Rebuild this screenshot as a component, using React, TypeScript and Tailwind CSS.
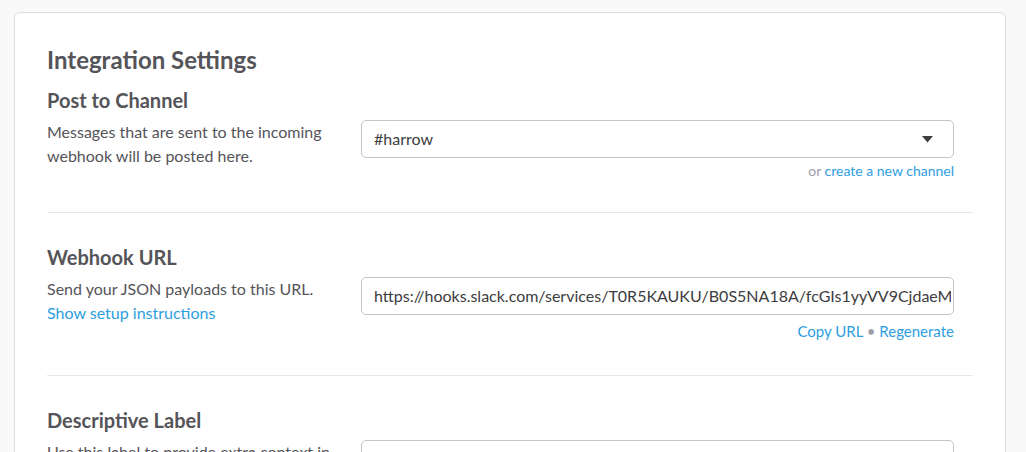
const font = { fontFamily: "Lato, 'Noto Sans', sans-serif" }

function Caret() {
    return (
        <svg width="11" height="7" viewBox="0 0 11 7" className="shrink-0">
            <path d="M0 0 L11 0 L5.5 6.5 Z" fill="#3d3c40" />
        </svg>
    )
}

export default function App() {
    return (
        <div className="min-h-screen bg-[#f9f9f9] pt-[12px] pl-[14px] pr-[20px]" style={font}>
            <div className="bg-white border border-[#dddddd] rounded-[6px] px-[32px] pt-[32px] text-[#555459]">
                <h1 className="text-[24px] font-bold leading-[30px] mb-[13px]">Integration Settings</h1>

                {/* Post to Channel */}
                <section className="pb-[32px] border-b border-[#e8e8e8]">
                    <h2 className="text-[20px] font-bold leading-[24px] mb-[8px]">Post to Channel</h2>
                    <div className="flex">
                        <p className="w-[314px] text-[16px] leading-[24px]">
                            Messages that are sent to the incoming webhook will be posted here.
                        </p>
                        <div className="w-[593px]">
                            <div className="h-[38px] border border-[#c5c5c5] rounded-[5px] flex items-center justify-between pl-[12px] pr-[20px]">
                                <span className="text-[16px] text-[#3d3c40]">#harrow</span>
                                <Caret />
                            </div>
                            <div className="text-right text-[14px] leading-[18px] mt-[4px]">
                                <span className="text-[#9e9ea6]">or </span>
                                <a className="text-[#2d9ee0]">create a new channel</a>
                            </div>
                        </div>
                    </div>
                </section>

                {/* Webhook URL */}
                <section className="pt-[32px] pb-[35px] border-b border-[#e8e8e8]">
                    <h2 className="text-[20px] font-bold leading-[24px] mb-[8px]">Webhook URL</h2>
                    <div className="flex">
                        <div className="w-[314px] text-[16px] leading-[24px]">
                            <p>Send your JSON payloads to this URL.</p>
                            <a className="text-[#2d9ee0]">Show setup instructions</a>
                        </div>
                        <div className="w-[593px]">
                            <div className="h-[38px] border border-[#c5c5c5] rounded-[5px] flex items-center pl-[12px] pr-[2px] overflow-hidden">
                                <span className="text-[16px] text-[#3d3c40] whitespace-nowrap overflow-hidden">
                                    https://hooks.slack.com/services/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
                                </span>
                            </div>
                            <div className="text-right text-[15px] leading-[18px] mt-[7px]">
                                <a className="text-[#2d9ee0]">Copy URL</a>
                                <span className="text-[#9e9ea6]"> • </span>
                                <a className="text-[#2d9ee0]">Regenerate</a>
                            </div>
                        </div>
                    </div>
                </section>

                {/* Descriptive Label */}
                <section className="pt-[32px] pb-[32px]">
                    <h2 className="text-[20px] font-bold leading-[24px] mb-[8px]">Descriptive Label</h2>
                    <div className="flex">
                        <p className="w-[314px] text-[16px] leading-[24px]">
                            Use this label to provide extra context in your list of integrations.
                        </p>
                        <div className="w-[593px]">
                            <div className="h-[38px] border border-[#c5c5c5] rounded-[5px]" />
                        </div>
                    </div>
                </section>
            </div>
        </div>
    )
}
